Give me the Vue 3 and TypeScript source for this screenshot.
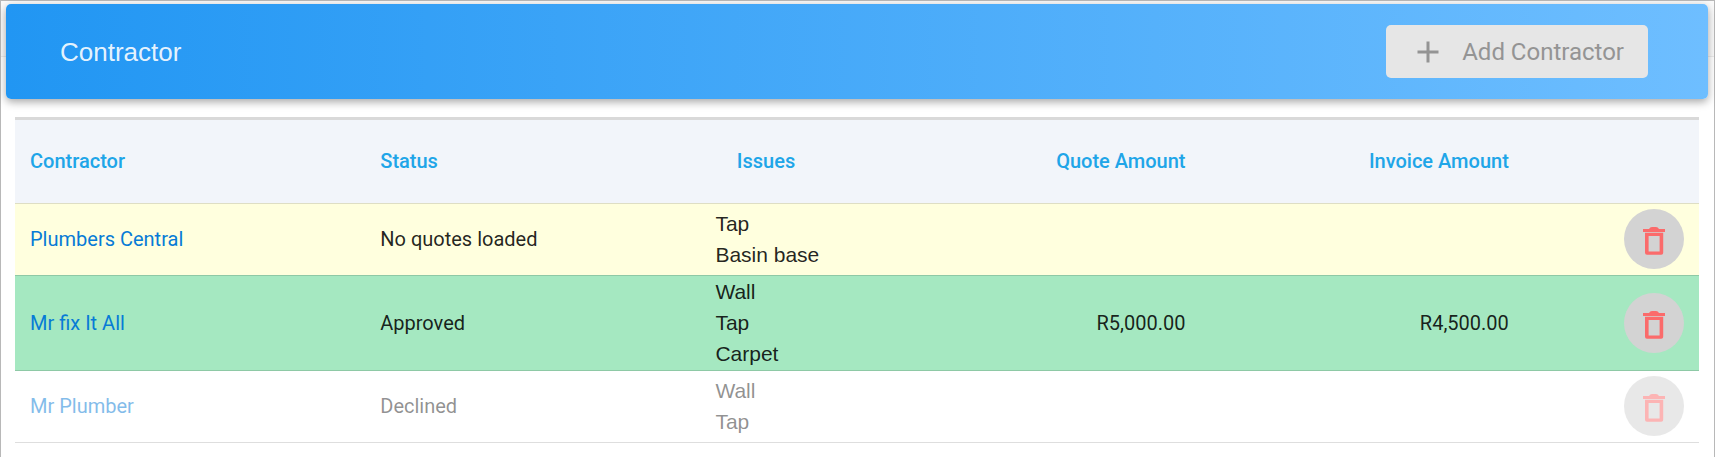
<script setup lang="ts">
interface Contractor {
  name: string
  status: string
  tone: 'pending' | 'approved' | 'declined'
  issues: string[]
  quote: string
  invoice: string
}

const contractors: Contractor[] = [
  { name: 'Plumbers Central', status: 'No quotes loaded', tone: 'pending', issues: ['Tap', 'Basin base'], quote: '', invoice: '' },
  { name: 'Mr fix It All', status: 'Approved', tone: 'approved', issues: ['Wall', 'Tap', 'Carpet'], quote: 'R5,000.00', invoice: 'R4,500.00' },
  { name: 'Mr Plumber', status: 'Declined', tone: 'declined', issues: ['Wall', 'Tap'], quote: '', invoice: '' },
]
</script>

<template>
  <main class="page">
    <header class="banner">
      <h1>Contractor</h1>
      <button class="add" type="button" disabled>
        <svg viewBox="0 0 24 24" aria-hidden="true"><path d="M19 13h-6v6h-2v-6H5v-2h6V5h2v6h6z" /></svg>
        <span>Add Contractor</span>
      </button>
    </header>

    <div class="content">
      <table>
        <colgroup>
          <col class="c-name" /><col class="c-status" /><col class="c-issues" />
          <col class="c-quote" /><col class="c-invoice" /><col />
        </colgroup>
        <thead>
          <tr>
            <th scope="col">Contractor</th>
            <th scope="col">Status</th>
            <th scope="col" class="center">Issues</th>
            <th scope="col" class="right">Quote Amount</th>
            <th scope="col" class="right">Invoice Amount</th>
            <td></td>
          </tr>
        </thead>
        <tbody>
          <tr v-for="c in contractors" :key="c.name" :class="c.tone">
            <td><a href="#">{{ c.name }}</a></td>
            <td><span>{{ c.status }}</span></td>
            <td class="issues">
              <ul>
                <li v-for="issue in c.issues" :key="issue">{{ issue }}</li>
              </ul>
            </td>
            <td class="right">{{ c.quote }}</td>
            <td class="right">{{ c.invoice }}</td>
            <td class="action">
              <button class="remove" type="button" :aria-label="`Delete ${c.name}`">
                <svg viewBox="0 -4 22 32" aria-hidden="true">
                  <path d="M0 2h6q1-2 3-2h4q2 0 3 2h6v3H0z" />
                  <path fill-rule="evenodd" d="M2 5.7h18.2v20q0 2-2 2H4q-2 0-2-2zM5.6 9v15.4h11V9z" />
                </svg>
              </button>
            </td>
          </tr>
        </tbody>
      </table>
    </div>
  </main>
</template>

<style>
body {
  margin: 0;
  background: #fff;
}
</style>

<style scoped>
.page {
  box-sizing: border-box;
  min-height: 100vh;
  padding: 3px 6px 14px 5px;
  border: 1px solid #b8b8b8;
  background: linear-gradient(#fafafa 55px, #ebebeb 55px, #ebebeb 56px, #fff 56px);
  color: rgba(0, 0, 0, 0.87);
  font-family: Roboto, "Liberation Sans", sans-serif;
  font-size: 20px;
}

.banner {
  display: flex;
  align-items: center;
  justify-content: space-between;
  padding: 21px 60px 21px 54px;
  border-radius: 5px;
  background: linear-gradient(to right, #2196f3, #6ebeff);
  box-shadow: 0 3px 8px rgba(0, 0, 0, 0.35);
}

h1 {
  margin: 0;
  color: rgba(255, 255, 255, 0.9);
  font: 400 26px/32px "Liberation Sans", Arial, sans-serif;
}

.add {
  display: flex;
  align-items: center;
  gap: 16px;
  height: 53px;
  padding: 0 24px;
  border: 0;
  border-radius: 5px;
  background: #e6e6e6;
  color: #949494;
  font: 400 24px/32px Roboto, sans-serif;
}

.add svg {
  width: 36px;
  height: 36px;
  fill: currentColor;
}

.content {
  padding: 18px 9px 0;
}

table {
  width: 100%;
  table-layout: fixed;
  border-collapse: separate;
  border-spacing: 0;
  border-top: 3px solid #d9d9d9;
}

.c-name { width: 20.8%; }
.c-status { width: 19.9%; }
.c-issues { width: 7.8%; }
.c-quote { width: 21.9%; }
.c-invoice { width: 19.2%; }

th,
td {
  padding: 5px 15px 6px;
  text-align: left;
  vertical-align: middle;
  white-space: nowrap;
  line-height: 30px;
}

thead th,
thead td {
  height: 72px;
  padding-bottom: 5px;
  border-bottom: 1px solid #dedec4;
  background: #f2f5fa;
  color: #20a5e8;
  font-weight: 500;
}

thead th {
  padding-bottom: 6px;
}

tbody td {
  border-bottom: 1px solid #dedede;
}

.pending td {
  border-color: #8ec9a6;
  background: #ffffde;
}

.approved td {
  border-color: #8ec9a6;
  background: #a5e8c1;
}

.declined td > * {
  opacity: 0.5;
}

th.center { text-align: center; }
th.right, td.right { text-align: right; }

a {
  color: #077bd6;
  text-decoration: none;
}

td.issues {
  padding-top: 0;
  padding-bottom: 0;
}

ul {
  margin: 0;
  padding: 0 0 1px;
  list-style: none;
  font: 21px/31px "Liberation Sans", Arial, sans-serif;
}

td.action {
  text-align: right;
}

.remove {
  display: inline-flex;
  align-items: center;
  justify-content: center;
  width: 60px;
  height: 60px;
  padding: 0;
  border: 0;
  border-radius: 50%;
  background: #d3d3d3;
  color: #fb6b6b;
  vertical-align: top;
}

.remove svg {
  width: 22px;
  height: 32px;
  fill: currentColor;
}
</style>
